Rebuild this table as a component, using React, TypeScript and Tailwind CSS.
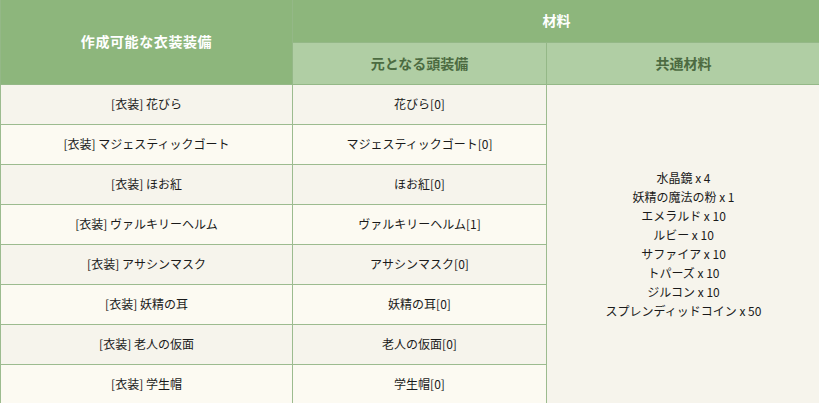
import React from "react";

const rows: [string, string][] = [
  ["[衣装] 花びら", "花びら[0]"],
  ["[衣装] マジェスティックゴート", "マジェスティックゴート[0]"],
  ["[衣装] ほお紅", "ほお紅[0]"],
  ["[衣装] ヴァルキリーヘルム", "ヴァルキリーヘルム[1]"],
  ["[衣装] アサシンマスク", "アサシンマスク[0]"],
  ["[衣装] 妖精の耳", "妖精の耳[0]"],
  ["[衣装] 老人の仮面", "老人の仮面[0]"],
  ["[衣装] 学生帽", "学生帽[0]"],
];

const materials = [
  "水晶鏡 x 4",
  "妖精の魔法の粉 x 1",
  "エメラルド x 10",
  "ルビー x 10",
  "サファイア x 10",
  "トパーズ x 10",
  "ジルコン x 10",
  "スプレンディッドコイン x 50",
];

export default function App() {
  return (
    <div
      className="w-[819px] h-[403px] overflow-hidden bg-white"
      style={{ fontFamily: '"Noto Sans CJK JP", "Noto Sans", sans-serif' }}
    >
      <table className="w-[820px] table-fixed border-collapse text-[12px] text-[#1a1a1a]">
        <colgroup>
          <col className="w-[292px]" />
          <col className="w-[254px]" />
          <col className="w-[274px]" />
        </colgroup>
        <thead>
          <tr className="h-[42px]">
            <th
              rowSpan={2}
              className="bg-[#8db67c] text-white text-[14px] tracking-[0.6px] font-bold border border-[#94b887] border-t-0"
            >
              作成可能な衣装装備
            </th>
            <th
              colSpan={2}
              className="bg-[#8db67c] text-white text-[14px] font-bold border border-[#94b887] border-t-0"
            >
              材料
            </th>
          </tr>
          <tr className="h-[42px]">
            <th className="bg-[#b0cea4] text-[#4c6b41] text-[14px] font-bold border border-[#94b887]">
              元となる頭装備
            </th>
            <th className="bg-[#b0cea4] text-[#4c6b41] text-[14px] font-bold border border-[#94b887]">
              共通材料
            </th>
          </tr>
        </thead>
        <tbody>
          {rows.map(([a, b], i) => (
            <tr
              key={i}
              className={`h-[40px] ${i % 2 === 0 ? "bg-[#f6f4ec]" : "bg-[#fcfaf2]"}`}
            >
              <td className="border border-[#9cbb8f] text-center font-normal">{a}</td>
              <td className="border border-[#9cbb8f] text-center">{b}</td>
              {i === 0 && (
                <td
                  rowSpan={8}
                  className="border border-[#9cbb8f] bg-[#f6f4ec] text-center align-middle leading-[19px]"
                >
                  {materials.map((m) => (
                    <div key={m}>{m}</div>
                  ))}
                </td>
              )}
            </tr>
          ))}
        </tbody>
      </table>
    </div>
  );
}
